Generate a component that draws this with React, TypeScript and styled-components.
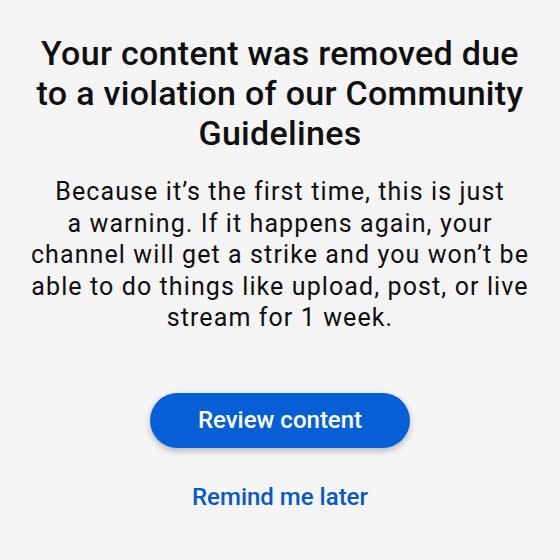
import React from "react";
import styled, { createGlobalStyle } from "styled-components";

const Global = createGlobalStyle`
  html, body { margin: 0; padding: 0; background: #f4f4f4; }
  body { font-family: Roboto, "Noto Sans", Arial, sans-serif; }
`;

const Page = styled.div`
  width: 560px;
  height: 560px;
  box-sizing: border-box;
  padding: 33px 10px 0;
  display: flex;
  flex-direction: column;
  align-items: center;
  background: #f4f4f4;
`;

const Title = styled.h1`
  margin: 0;
  font-size: 34px;
  font-weight: 500;
  line-height: 40px;
  letter-spacing: 0.3px;
  color: #0f0f0f;
  text-align: center;
`;

const Body = styled.p`
  margin: 23px 0 0;
  font-size: 25px;
  font-weight: 400;
  line-height: 31.5px;
  letter-spacing: 1.1px;
  color: #0f0f0f;
  text-align: center;
`;

const Primary = styled.button`
  margin-top: 59px;
  width: 260px;
  height: 55px;
  border: none;
  border-radius: 28px;
  background: #065fd4;
  color: #ffffff;
  font-family: Roboto, sans-serif;
  font-size: 24px;
  font-weight: 500;
  box-shadow: 0 3px 6px rgba(0, 0, 0, 0.25);
`;

const Link = styled.button`
  margin-top: 35px;
  border: none;
  background: none;
  color: #0758c8;
  font-family: Roboto, sans-serif;
  font-size: 24px;
  line-height: 28px;
  font-weight: 500;
  padding: 0;
`;

export default function App() {
  return (
    <>
      <Global />
      <Page>
        <Title>
          Your content was removed due
          <br />
          to a violation of our Community
          <br />
          Guidelines
        </Title>
        <Body>
          Because it’s the first time, this is just
          <br />
          a warning. If it happens again, your
          <br />
          channel will get a strike and you won’t be
          <br />
          able to do things like upload, post, or live
          <br />
          stream for 1 week.
        </Body>
        <Primary>Review content</Primary>
        <Link>Remind me later</Link>
      </Page>
    </>
  );
}
